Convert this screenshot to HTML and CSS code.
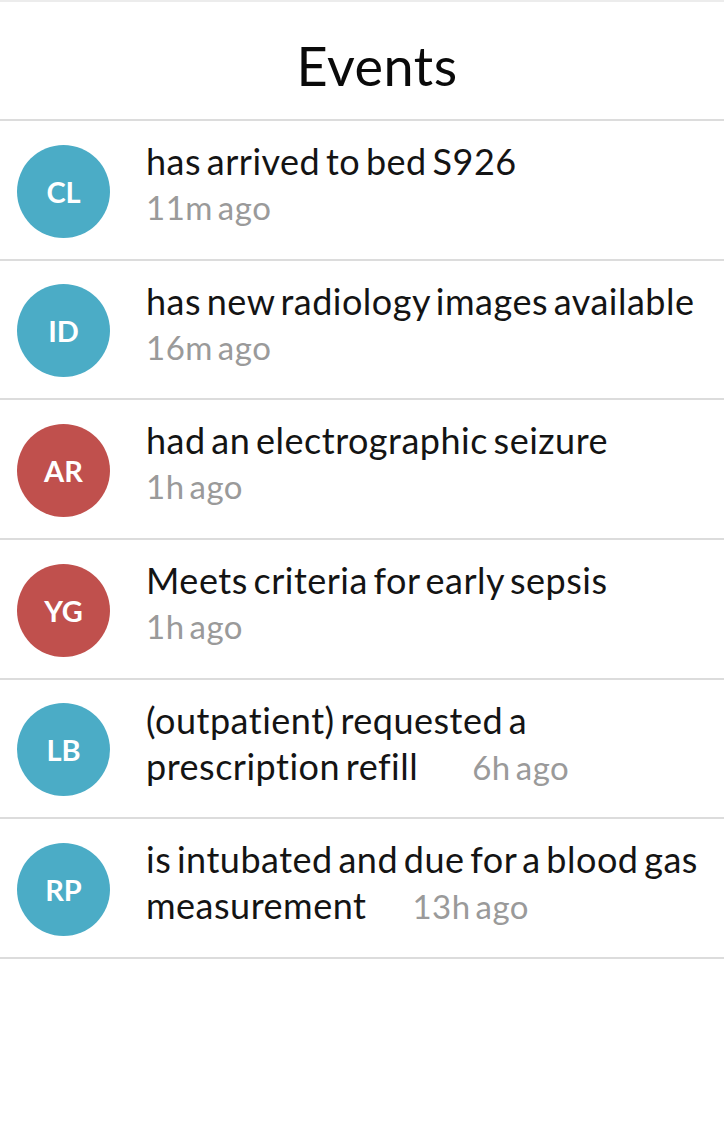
FILE: index.html
```html
<!DOCTYPE html>
<html lang="en">
<head>
<meta charset="utf-8">
<title>Events</title>
<link rel="stylesheet" href="styles.css">
</head>
<body>
<div class="screen">
  <header class="header">
    <h1 class="title">Events</h1>
  </header>
  <ul class="events">
    <li class="event">
      <div class="avatar avatar-blue">CL</div>
      <div class="body">
        <div class="message">has arrived to bed S926</div>
        <div class="time">11m ago</div>
      </div>
    </li>
    <li class="event">
      <div class="avatar avatar-blue">ID</div>
      <div class="body">
        <div class="message">has new radiology images available</div>
        <div class="time">16m ago</div>
      </div>
    </li>
    <li class="event">
      <div class="avatar avatar-red">AR</div>
      <div class="body">
        <div class="message">had an electrographic seizure</div>
        <div class="time">1h ago</div>
      </div>
    </li>
    <li class="event">
      <div class="avatar avatar-red">YG</div>
      <div class="body">
        <div class="message">Meets criteria for early sepsis</div>
        <div class="time">1h ago</div>
      </div>
    </li>
    <li class="event">
      <div class="avatar avatar-blue">LB</div>
      <div class="body">
        <div class="message">(outpatient) requested a prescription refill<span class="time time-inline time-wide">6h ago</span></div>
      </div>
    </li>
    <li class="event">
      <div class="avatar avatar-blue">RP</div>
      <div class="body">
        <div class="message">is intubated and due for a blood gas measurement<span class="time time-inline">13h ago</span></div>
      </div>
    </li>
  </ul>
</div>
</body>
</html>
```

FILE: styles.css
```css
* {
  box-sizing: border-box;
}

html, body {
  margin: 0;
  padding: 0;
  background: #ffffff;
}

body {
  font-family: Lato, "Open Sans", "Liberation Sans", sans-serif;
  color: #111111;
}

.screen {
  width: 724px;
}

.header {
  height: 121px;
  border-top: 2px solid #ececec;
  border-bottom: 2px solid #dcdcdc;
  display: flex;
  align-items: center;
  justify-content: center;
}

.title {
  margin: 0;
  font-size: 54px;
  font-weight: 400;
  letter-spacing: 0.5px;
  color: #0a0a0a;
  line-height: 1;
  padding-top: 10px;
  padding-left: 30px;
}

.events {
  list-style: none;
  margin: 0;
  padding: 0;
}

.event {
  height: 139.67px;
  border-bottom: 2px solid #dcdcdc;
  display: grid;
  grid-template-columns: 93px 1fr;
  column-gap: 36px;
  padding-left: 17px;
  padding-right: 2px;
}

.avatar {
  align-self: center;
  width: 93px;
  height: 93px;
  border-radius: 50%;
  display: flex;
  align-items: center;
  justify-content: center;
  color: #ffffff;
  font-weight: 700;
  font-size: 29px;
  margin-top: 3px;
}

.avatar-blue {
  background: #4bacc6;
}

.avatar-red {
  background: #c0504d;
}

.body {
  padding-top: 17px;
}

.message {
  font-size: 36px;
  line-height: 46px;
  letter-spacing: 0.5px;
  word-spacing: -4px;
  color: #141414;
}

.time {
  font-size: 33px;
  line-height: 46px;
  letter-spacing: 0.5px;
  word-spacing: -4px;
  color: #9a9a9a;
}

.time-inline {
  margin-left: 46px;
}

.time-wide {
  margin-left: 54px;
}
```
